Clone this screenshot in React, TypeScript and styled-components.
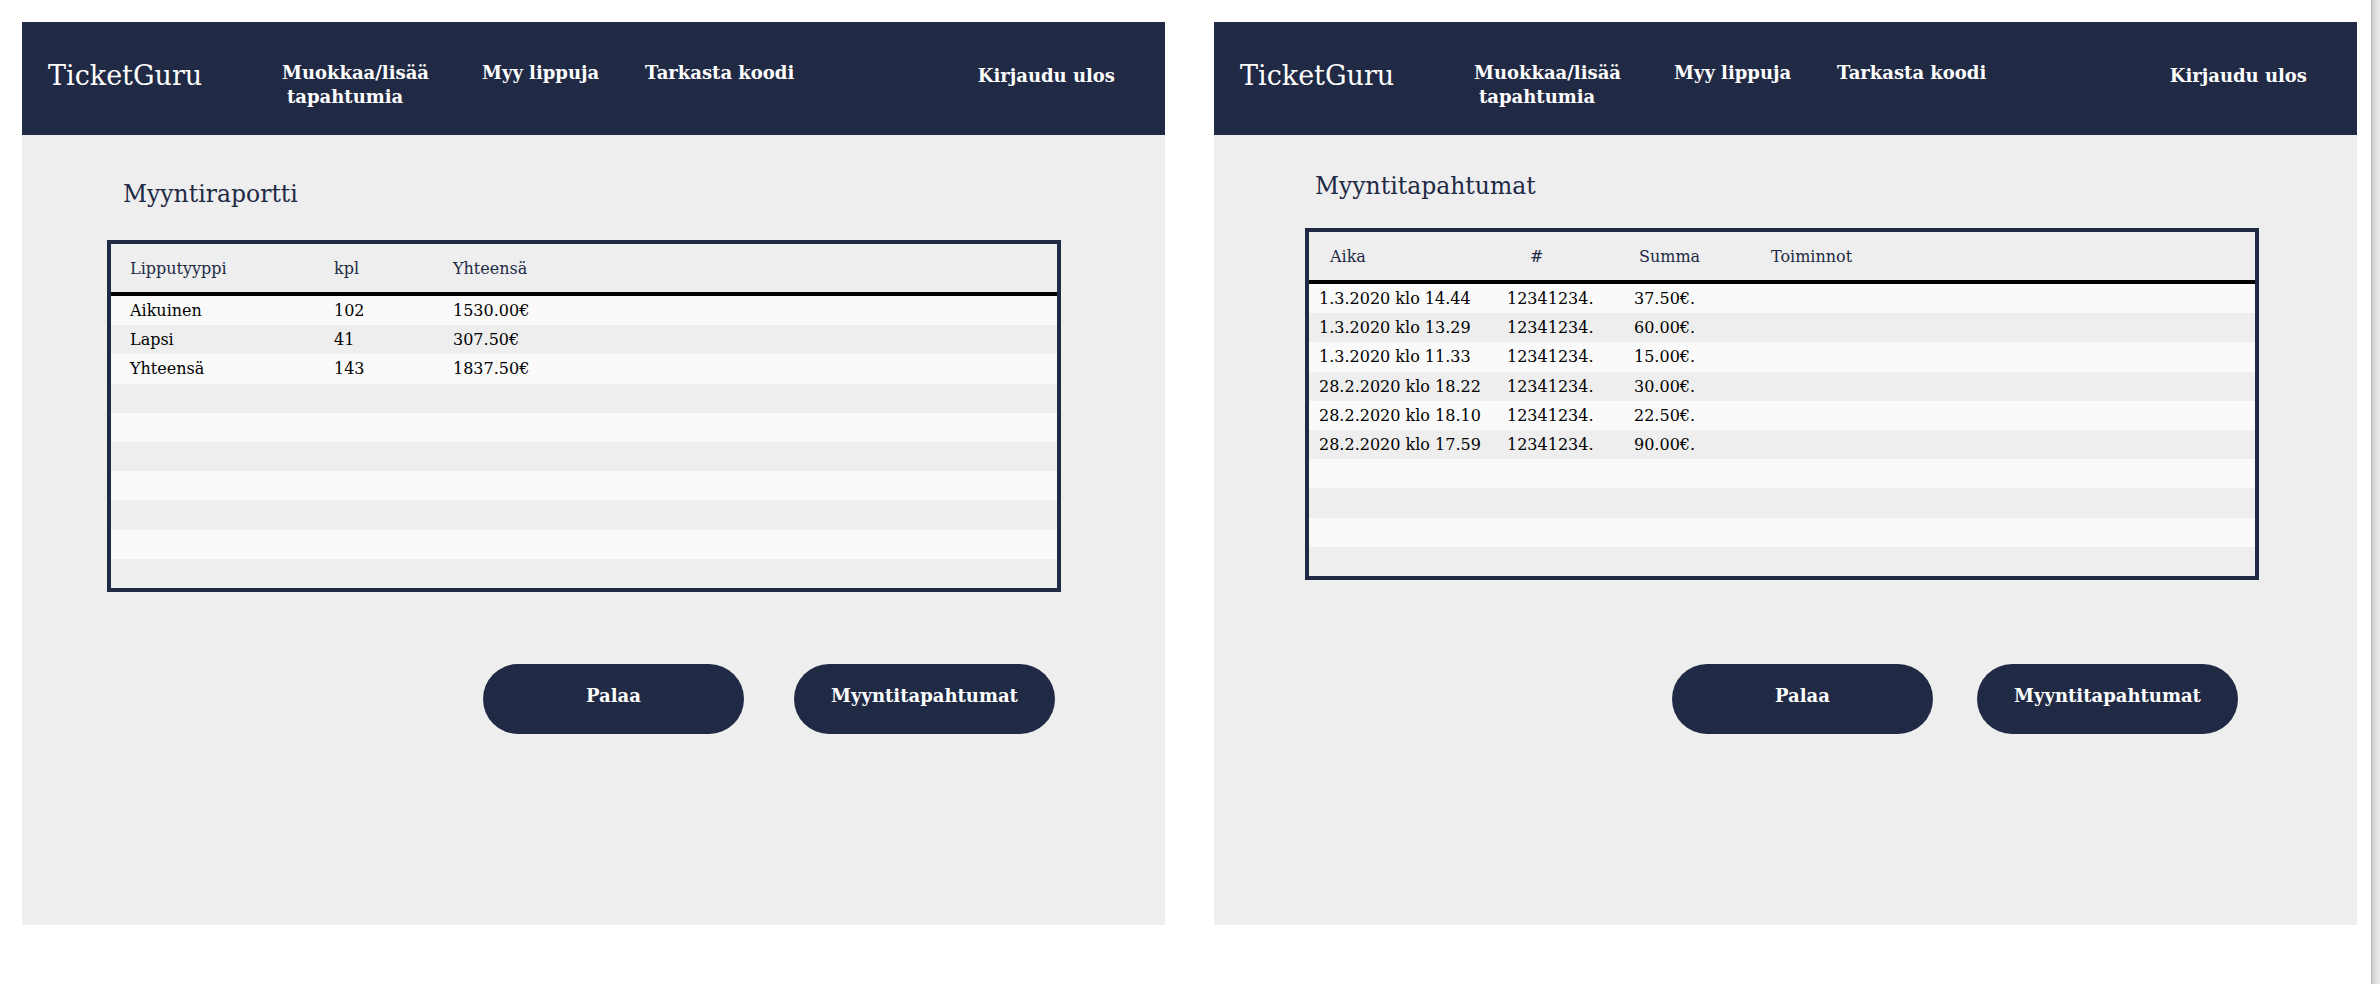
import styled, { createGlobalStyle } from 'styled-components';

const GlobalStyle = createGlobalStyle`
  html, body {
    margin: 0;
    padding: 0;
    background: #ffffff;
    overflow: hidden;
  }
  body {
    font-family: "DejaVu Serif", "Liberation Serif", serif;
  }
`;

const NAVY = '#212a45';

const StyledPage = styled.div`
  display: flex;
  align-items: flex-start;
  height: 984px;
  overflow: hidden;
`;

const Screens = styled.main`
  display: flex;
  align-items: flex-start;
  gap: 49px;
  padding: 22px 0 0 22px;
`;

const ScrollTrack = styled.div`
  flex-shrink: 0;
  width: 9px;
  height: 984px;
  margin-left: auto;
  background: linear-gradient(to right, #bcbcbc, #dadada 35%, #ededed);
`;

const Panel = styled.section`
  flex-shrink: 0;
  width: 1143px;
  height: 903px;
  background: #eeeeee;
  display: flex;
  flex-direction: column;
`;

const TopBar = styled.header`
  height: 113px;
  box-sizing: border-box;
  background: ${NAVY};
  color: #ffffff;
  display: flex;
  align-items: flex-start;
  padding: 38px 50px 0 26px;
`;

const Logo = styled.div`
  width: 234px;
  font-size: 27px;
  line-height: 32px;
  font-weight: 400;
`;

const NavGrid = styled.nav`
  display: grid;
  grid-template-columns: 200px 163px auto;
  margin-top: 1px;
`;

const NavLink = styled.a<{ $indent?: number }>`
  font-size: 18px;
  font-weight: 700;
  line-height: 24px;
  color: #ffffff;
  text-decoration: none;
  cursor: pointer;

  span {
    display: block;
    padding-left: ${(p) => p.$indent ?? 0}px;
  }
`;

const LogoutLink = styled(NavLink)`
  margin-left: auto;
  margin-top: 4px;
`;

const Content = styled.div<{ $top: number }>`
  display: flex;
  flex-direction: column;
  padding-top: ${(p) => p.$top}px;
`;

const Title = styled.h2`
  margin: 0 0 0 101px;
  font-size: 23.5px;
  line-height: 28px;
  font-weight: 400;
  color: ${NAVY};
`;

const Table = styled.div<{ $top: number; $left: number }>`
  width: 954px;
  box-sizing: border-box;
  margin: ${(p) => p.$top}px 0 0 ${(p) => p.$left}px;
  border: 4px solid ${NAVY};
`;

const HeadRow = styled.div<{ $cols: string; $pad: number }>`
  display: grid;
  grid-template-columns: ${(p) => p.$cols};
  align-items: center;
  height: 48px;
  padding-left: ${(p) => p.$pad}px;
  border-bottom: 4px solid #000000;
  background: #eeeeee;
  font-size: 16px;
  color: ${NAVY};
`;

const BodyRow = styled.div<{ $cols: string; $pad: number }>`
  display: grid;
  grid-template-columns: ${(p) => p.$cols};
  align-items: center;
  height: 29.2px;
  padding-left: ${(p) => p.$pad}px;
  font-size: 16px;
  color: #000000;
  white-space: nowrap;

  &:nth-child(odd) {
    background: #fafafa;
  }
  &:nth-child(even) {
    background: #eeeeee;
  }
`;

const ButtonRow = styled.div<{ $top: number; $right: number; $gap: number }>`
  display: flex;
  justify-content: flex-end;
  gap: ${(p) => p.$gap}px;
  margin-top: ${(p) => p.$top}px;
  padding-right: ${(p) => p.$right}px;
`;

const PillButton = styled.button`
  width: 261px;
  height: 70px;
  border: none;
  border-radius: 35px;
  background: ${NAVY};
  color: #ffffff;
  font-family: "DejaVu Serif", "Liberation Serif", serif;
  font-size: 18px;
  font-weight: 700;
  padding: 0 0 6px;
  cursor: pointer;
`;

type Layout = {
  top: number;
  tableGap: number;
  tableLeft: number;
  buttonTop: number;
  buttonRight: number;
  buttonGap: number;
};

type Grid = { cols: string; pad: number };

type ScreenProps = {
  title: string;
  layout: Layout;
  headGrid: Grid;
  bodyGrid: Grid;
  headers: string[];
  rows: string[][];
};

const TOTAL_ROWS = 10;

const Header = () => (
  <TopBar>
    <Logo>TicketGuru</Logo>
    <NavGrid>
      <NavLink $indent={5}>
        Muokkaa/lisää
        <span>tapahtumia</span>
      </NavLink>
      <NavLink>Myy lippuja</NavLink>
      <NavLink>Tarkasta koodi</NavLink>
    </NavGrid>
    <LogoutLink>Kirjaudu ulos</LogoutLink>
  </TopBar>
);

const Screen = ({ title, layout, headGrid, bodyGrid, headers, rows }: ScreenProps) => {
  const filled = [...rows];
  while (filled.length < TOTAL_ROWS) filled.push([]);

  return (
    <Panel>
      <Header />
      <Content $top={layout.top}>
        <Title>{title}</Title>
        <Table $top={layout.tableGap} $left={layout.tableLeft}>
          <HeadRow $cols={headGrid.cols} $pad={headGrid.pad}>
            {headers.map((h) => (
              <span key={h}>{h}</span>
            ))}
          </HeadRow>
          <div>
            {filled.map((r, i) => (
              <BodyRow key={i} $cols={bodyGrid.cols} $pad={bodyGrid.pad}>
                {r.map((c, j) => (
                  <span key={j}>{c}</span>
                ))}
              </BodyRow>
            ))}
          </div>
        </Table>
        <ButtonRow $top={layout.buttonTop} $right={layout.buttonRight} $gap={layout.buttonGap}>
          <PillButton>Palaa</PillButton>
          <PillButton>Myyntitapahtumat</PillButton>
        </ButtonRow>
      </Content>
    </Panel>
  );
};

const reportRows = [
  ['Aikuinen', '102', '1530.00€'],
  ['Lapsi', '41', '307.50€'],
  ['Yhteensä', '143', '1837.50€'],
];

const salesRows = [
  ['1.3.2020 klo 14.44', '12341234.', '37.50€.'],
  ['1.3.2020 klo 13.29', '12341234.', '60.00€.'],
  ['1.3.2020 klo 11.33', '12341234.', '15.00€.'],
  ['28.2.2020 klo 18.22', '12341234.', '30.00€.'],
  ['28.2.2020 klo 18.10', '12341234.', '22.50€.'],
  ['28.2.2020 klo 17.59', '12341234.', '90.00€.'],
];

const App = () => (
  <>
    <GlobalStyle />
    <StyledPage>
      <Screens>
        <Screen
          title="Myyntiraportti"
          layout={{ top: 45, tableGap: 32, tableLeft: 85, buttonTop: 72, buttonRight: 110, buttonGap: 50 }}
          headGrid={{ cols: '204px 119px 1fr', pad: 19 }}
          bodyGrid={{ cols: '204px 119px 1fr', pad: 19 }}
          headers={['Lipputyyppi', 'kpl', 'Yhteensä']}
          rows={reportRows}
        />
        <Screen
          title="Myyntitapahtumat"
          layout={{ top: 37, tableGap: 28, tableLeft: 91, buttonTop: 84, buttonRight: 119, buttonGap: 44 }}
          headGrid={{ cols: '200px 109px 132px 1fr', pad: 21 }}
          bodyGrid={{ cols: '188px 127px 1fr', pad: 10 }}
          headers={['Aika', '#', 'Summa', 'Toiminnot']}
          rows={salesRows}
        />
      </Screens>
      <ScrollTrack />
    </StyledPage>
  </>
);

export default App;
